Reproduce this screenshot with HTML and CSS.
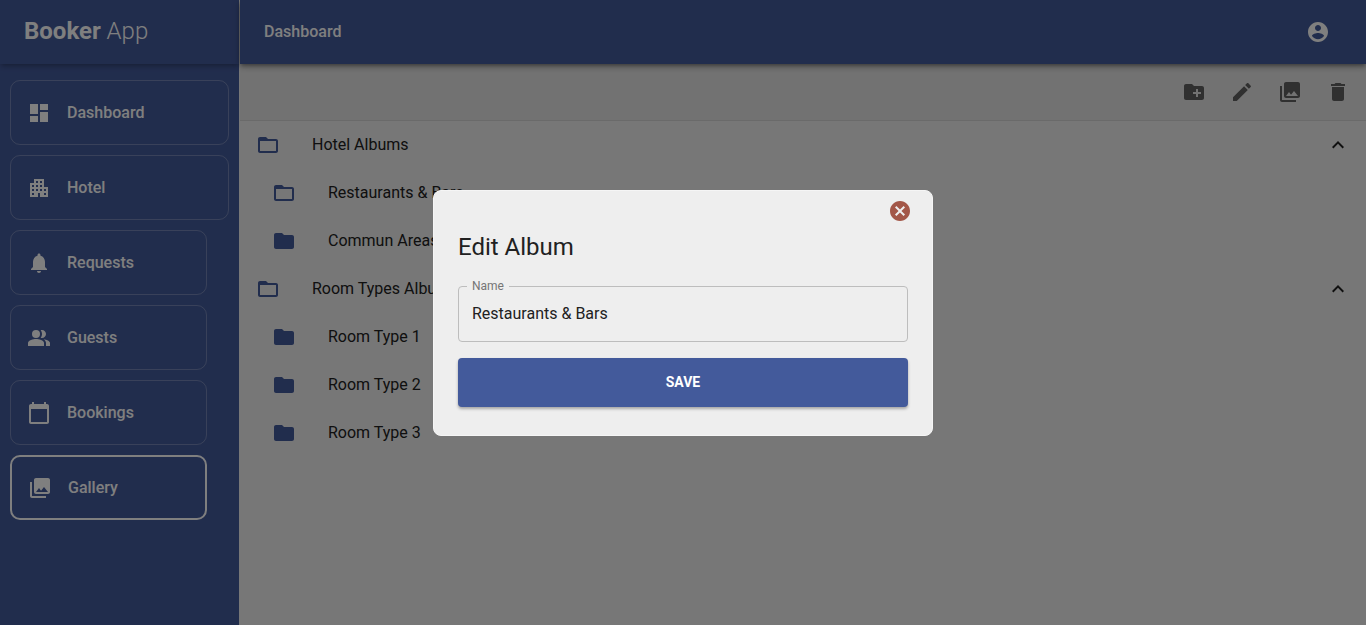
FILE: index.html
```html
<!DOCTYPE html>
<html lang="en">
<head>
  <meta charset="UTF-8" />
  <meta name="viewport" content="width=device-width, initial-scale=1.0" />
  <title>Booker App</title>
  <link rel="stylesheet" href="styles.css">
</head>
<body>
  <!-- shared icons -->
  <svg class="sprite" aria-hidden="true">
    <symbol id="i-folder-open" viewBox="0 0 24 24"><path d="M20 6h-8l-2-2H4c-1.100 0-1.990.9-1.990 2L2 18c0 1.100.9 2 2 2h16c1.100 0 2-.9 2-2V8c0-1.100-.9-2-2-2zm0 12H4V8h16v10z"/></symbol>
    <symbol id="i-folder" viewBox="0 0 24 24"><path d="M10 4H4c-1.100 0-1.990.9-1.990 2L2 18c0 1.100.9 2 2 2h16c1.100 0 2-.9 2-2V8c0-1.100-.9-2-2-2h-8l-2-2z"/></symbol>
    <symbol id="i-less" viewBox="0 0 24 24"><path d="M12 8l-6 6 1.410 1.410L12 10.830l4.590 4.580L18 14z"/></symbol>
    <symbol id="i-photos" viewBox="0 0 24 24"><path d="M22 16V4c0-1.100-.9-2-2-2H8c-1.100 0-2 .9-2 2v12c0 1.100.9 2 2 2h12c1.100 0 2-.9 2-2zm-11-4l2.030 2.710L16 11l4 5H8l3-4zM2 6v14c0 1.100.9 2 2 2h14v-2H4V6H2z"/></symbol>
  </svg>

  <div class="app">
    <aside class="sidebar">
      <div class="brand"><strong>Booker</strong>&nbsp;App</div>
      <nav class="menu">
        <a href="#dashboard" class="wide">
          <svg viewBox="0 0 24 24"><path d="M3 13h8V3H3v10zm0 8h8v-6H3v6zm10 0h8V11h-8v10zm0-18v6h8V3h-8z"/></svg>
          Dashboard
        </a>
        <a href="#hotel" class="wide">
          <svg viewBox="0 0 24 24"><path d="M17 11V3H7v4H3v14h8v-4h2v4h8V11h-4zM7 19H5v-2h2v2zm0-4H5v-2h2v2zm0-4H5V9h2v2zm4 4H9v-2h2v2zm0-4H9V9h2v2zm0-4H9V5h2v2zm4 8h-2v-2h2v2zm0-4h-2V9h2v2zm0-4h-2V5h2v2zm4 12h-2v-2h2v2zm0-4h-2v-2h2v2z"/></svg>
          Hotel
        </a>
        <a href="#requests">
          <svg viewBox="0 0 24 24"><path d="M12 22c1.100 0 2-.9 2-2h-4c0 1.100.89 2 2 2zm6-6v-5c0-3.070-1.640-5.640-4.500-6.320V4c0-.83-.67-1.500-1.500-1.500s-1.500.67-1.500 1.500v.68C7.630 5.360 6 7.920 6 11v5l-2 2v1h16v-1l-2-2z"/></svg>
          Requests
        </a>
        <a href="#guests">
          <svg viewBox="0 0 24 24"><path d="M16.670 13.130C18.040 14.060 19 15.320 19 17v3h4v-3c0-2.180-3.570-3.470-6.330-3.870zM15 12c2.210 0 4-1.790 4-4s-1.790-4-4-4c-.47 0-.91.1-1.330.24C14.500 5.270 15 6.580 15 8s-.5 2.730-1.330 3.760c.42.14.86.24 1.330.24z"/><circle cx="9" cy="8" r="4"/><path d="M9 13c-2.670 0-8 1.340-8 4v3h16v-3c0-2.660-5.330-4-8-4z"/></svg>
          Guests
        </a>
        <a href="#bookings">
          <svg viewBox="0 0 24 24"><path d="M20 3h-1V1h-2v2H7V1H5v2H4c-1.100 0-2 .9-2 2v16c0 1.100.9 2 2 2h16c1.100 0 2-.9 2-2V5c0-1.100-.9-2-2-2zm0 18H4V8h16v13z"/></svg>
          Bookings
        </a>
        <a href="#gallery" class="active">
          <svg><use href="#i-photos"/></svg>
          Gallery
        </a>
      </nav>
    </aside>

    <div class="page">
      <header class="topbar">
        <h1>Dashboard</h1>
        <button type="button" class="icon-btn" aria-label="Account">
          <svg viewBox="0 0 24 24"><path d="M12 2C6.480 2 2 6.480 2 12s4.480 10 10 10 10-4.480 10-10S17.520 2 12 2zm0 3c1.660 0 3 1.340 3 3s-1.340 3-3 3-3-1.340-3-3 1.340-3 3-3zm0 14.200c-2.500 0-4.710-1.280-6-3.220.03-1.990 4-3.080 6-3.080 1.990 0 5.970 1.090 6 3.080-1.290 1.940-3.500 3.220-6 3.220z"/></svg>
        </button>
      </header>

      <div class="toolbar">
        <button type="button" class="icon-btn" aria-label="New album">
          <svg viewBox="0 0 24 24"><path d="M20 6h-8l-2-2H4c-1.110 0-1.990.89-1.990 2L2 18c0 1.110.89 2 2 2h16c1.110 0 2-.89 2-2V8c0-1.110-.89-2-2-2zm-1 8h-3v3h-2v-3h-3v-2h3V9h2v3h3v2z"/></svg>
        </button>
        <button type="button" class="icon-btn" aria-label="Edit album">
          <svg viewBox="0 0 24 24"><path d="M3 17.250V21h3.750L17.810 9.940l-3.750-3.750L3 17.250zM20.710 7.040c.39-.39.39-1.020 0-1.410l-2.340-2.340c-.39-.39-1.020-.39-1.410 0l-1.830 1.830 3.750 3.750 1.830-1.830z"/></svg>
        </button>
        <button type="button" class="icon-btn" aria-label="Photos">
          <svg><use href="#i-photos"/></svg>
        </button>
        <button type="button" class="icon-btn" aria-label="Delete album">
          <svg viewBox="0 0 24 24"><path d="M6 19c0 1.100.9 2 2 2h8c1.100 0 2-.9 2-2V7H6v12zM19 4h-3.500l-1-1h-5l-1 1H5v2h14V4z"/></svg>
        </button>
      </div>

      <main>
        <ul class="albums">
          <li>
            <a href="#hotel-albums"><svg><use href="#i-folder-open"/></svg><span>Hotel Albums</span><svg class="arrow"><use href="#i-less"/></svg></a>
            <ul>
              <li><a href="#restaurants"><svg><use href="#i-folder-open"/></svg><span>Restaurants &amp; Bars</span></a></li>
              <li><a href="#areas"><svg><use href="#i-folder"/></svg><span>Commun Areas</span></a></li>
            </ul>
          </li>
          <li>
            <a href="#room-albums"><svg><use href="#i-folder-open"/></svg><span>Room Types Albums</span><svg class="arrow"><use href="#i-less"/></svg></a>
            <ul>
              <li><a href="#room-1"><svg><use href="#i-folder"/></svg><span>Room Type 1</span></a></li>
              <li><a href="#room-2"><svg><use href="#i-folder"/></svg><span>Room Type 2</span></a></li>
              <li><a href="#room-3"><svg><use href="#i-folder"/></svg><span>Room Type 3</span></a></li>
            </ul>
          </li>
        </ul>
      </main>
    </div>
  </div>

  <!-- EDIT ALBUM -->
  <div class="backdrop">
    <div class="modal" role="dialog" aria-labelledby="modalTitle">
      <button type="button" class="close" aria-label="Close">
        <svg viewBox="0 0 24 24"><path d="M12 2C6.470 2 2 6.470 2 12s4.470 10 10 10 10-4.470 10-10S17.530 2 12 2zm5 13.590L15.590 17 12 13.410 8.410 17 7 15.590 10.590 12 7 8.410 8.410 7 12 10.590 15.590 7 17 8.410 13.410 12 17 15.590z"/></svg>
      </button>
      <h2 id="modalTitle">Edit Album</h2>
      <form>
        <div class="field">
          <label for="name">Name</label>
          <input type="text" id="name" name="name" value="Restaurants &amp; Bars">
        </div>
        <button type="submit" class="save">SAVE</button>
      </form>
    </div>
  </div>
</body>
</html>
```
FILE: styles.css
```css
:root {
  --blue: #435a9b;
  --grey: #eeeeee;
  --text: #212121;
}

* { box-sizing: border-box; margin: 0; padding: 0; }
body {
  font-family: Roboto, sans-serif;
  font-size: 16px;
  line-height: 24px;
  background: var(--grey);
  color: var(--text);
}
ul { list-style: none; }
a { color: inherit; text-decoration: none; }
button { font-family: inherit; border: none; background: none; cursor: pointer; }
svg { width: 24px; height: 24px; fill: currentColor; display: block; flex-shrink: 0; }
.sprite { display: none; }

.app { display: flex; min-height: 100vh; }

/* sidebar */
.sidebar {
  width: 240px;
  flex-shrink: 0;
  background: var(--blue);
  color: white;
  border-right: 1px solid var(--grey);
}
.brand {
  height: 64px;
  display: flex;
  align-items: center;
  padding: 0 24px 2px;
  font-size: 24px;
  font-weight: 300;
  box-shadow: 0 3px 5px -1px rgba(0, 0, 0, 0.3);
}
.brand strong { font-weight: 700; }
.menu {
  display: flex;
  flex-direction: column;
  gap: 10px;
  padding: 16px 32px 16px 10px;
}
.menu a {
  height: 65px;
  display: flex;
  align-items: center;
  gap: 16px;
  padding: 0 16px;
  font-weight: 500;
  border: 1px solid rgba(255, 255, 255, 0.25);
  border-radius: 10px;
}
.menu a.wide { margin-right: -22px; }
.menu a.active { border: 2px solid white; }

/* page */
.page { flex: 1; min-width: 0; }
.topbar {
  position: relative;
  height: 64px;
  display: flex;
  align-items: center;
  justify-content: space-between;
  padding: 0 24px;
  background: var(--blue);
  color: white;
  box-shadow: 0 2px 4px -1px rgba(0, 0, 0, 0.4), 0 4px 5px rgba(0, 0, 0, 0.14), 0 1px 10px rgba(0, 0, 0, 0.12);
}
.topbar h1 { font-size: 16px; font-weight: 500; }
.icon-btn { width: 48px; height: 48px; padding: 12px; color: inherit; }
.toolbar {
  height: 57px;
  display: flex;
  align-items: center;
  justify-content: flex-end;
  padding: 0 4px;
  background: #e5e5e5;
  border-bottom: 1px solid #d5d5d5;
  color: #616161;
}

.albums a {
  height: 48px;
  display: flex;
  align-items: center;
  padding: 0 16px;
}
.albums ul a { padding-left: 32px; }
.albums svg { color: var(--blue); }
.albums span { flex: 1; margin-left: 32px; }
.albums .arrow { color: var(--text); }

/* modal */
.backdrop {
  position: fixed;
  inset: 0;
  display: flex;
  align-items: center;
  justify-content: center;
  background: rgba(0, 0, 0, 0.5);
}
.modal {
  position: relative;
  width: 500px;
  max-width: 100%;
  padding: 40px 24px 28px;
  background: var(--grey);
  border: 1px solid #f5f5f5;
  border-radius: 8px;
}
.close { position: absolute; top: 8px; right: 20px; color: #a35748; }
.modal h2 {
  font-size: 24px;
  line-height: 32px;
  font-weight: 400;
  margin-bottom: 23px;
}
.field { position: relative; margin-bottom: 16px; }
.field label {
  position: absolute;
  top: -8px;
  left: 9px;
  padding: 0 5px;
  font-size: 12px;
  line-height: 16px;
  color: #757575;
  background: var(--grey);
}
.field input {
  display: block;
  width: 100%;
  height: 56px;
  padding: 0 13px;
  font: inherit;
  color: var(--text);
  background: none;
  border: 1px solid #bdbdbd;
  border-radius: 4px;
}
.save {
  display: block;
  width: 100%;
  height: 49px;
  font-size: 14px;
  font-weight: 700;
  color: white;
  background: var(--blue);
  border-radius: 4px;
  box-shadow: 0 2px 3px rgba(0, 0, 0, 0.3);
}
```
